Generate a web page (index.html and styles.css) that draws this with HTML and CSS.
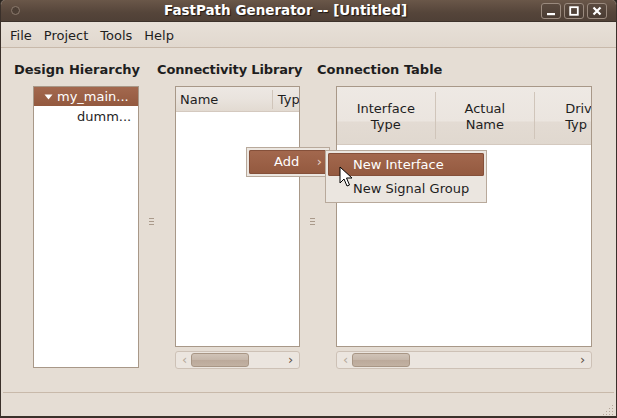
FILE: index.html
```html
<!DOCTYPE html>
<html>
<head>
<meta charset="utf-8">
<link rel="stylesheet" href="styles.css">
</head>
<body>
<div class="window">
  <div class="titlebar">
    <span class="title-orb"></span>
    <span class="title">FastPath Generator -- [Untitled]</span>
    <div class="wbtns">
      <span class="wbtn"><svg width="10" height="10" viewBox="0 0 10 10"><rect x="1" y="7" width="8" height="2.2" fill="#fff"/></svg></span>
      <span class="wbtn"><svg width="10" height="10" viewBox="0 0 10 10"><rect x="1.2" y="1.2" width="7.6" height="7.6" fill="none" stroke="#fff" stroke-width="1.8"/></svg></span>
      <span class="wbtn"><svg width="10" height="10" viewBox="0 0 10 10"><path d="M1.5 1.5 L8.5 8.5 M8.5 1.5 L1.5 8.5" stroke="#fff" stroke-width="2.2"/></svg></span>
    </div>
  </div>
  <div class="menubar">
    <span class="mi">File</span>
    <span class="mi">Project</span>
    <span class="mi">Tools</span>
    <span class="mi">Help</span>
  </div>
  <div class="main">
    <div class="pane p1">
      <div class="plabel">Design Hierarchy</div>
      <div class="tree">
        <div class="trow sel"><svg class="expander" width="9" height="6" viewBox="0 0 9 6"><path d="M0.5 0.5 H8.5 L4.5 5.5 Z" fill="#fff"/></svg>my_main...</div>
        <div class="trow child">dumm...</div>
      </div>
    </div>
    <div class="handle"><i></i><i></i><i></i></div>
    <div class="pane p2">
      <div class="plabel">Connectivity Library</div>
      <div class="sub">
        <div class="list">
          <div class="lhead">
            <div class="lcol lname">Name</div>
            <div class="lcol ltype">Typ</div>
          </div>
        </div>
        <div class="hscroll">
          <span class="arr">‹</span>
          <span class="thumb t1"></span>
          <span class="spacer"></span>
          <span class="arr r">›</span>
        </div>
      </div>
    </div>
    <div class="handle h2"><i></i><i></i><i></i></div>
    <div class="pane p3">
      <div class="plabel">Connection Table</div>
      <div class="sub">
        <div class="list table">
          <div class="thead">
            <div class="tcol c1">Interface<br>Type</div>
            <div class="tcol c2">Actual<br>Name</div>
            <div class="tcol c3">Driv<br>Typ</div>
          </div>
        </div>
        <div class="hscroll">
          <span class="arr">‹</span>
          <span class="thumb t2"></span>
          <span class="spacer"></span>
          <span class="arr r">›</span>
        </div>
      </div>
    </div>
  </div>
  <div class="statusbar"><span class="grip"></span></div>

  <div class="popup menu1">
    <div class="pitem hi"><span>Add</span><span class="parr">›</span></div>
  </div>
  <div class="popup menu2">
    <div class="pitem hi">New Interface</div>
    <div class="pitem">New Signal Group</div>
  </div>
  <svg class="cursor" width="14" height="22" viewBox="0 0 14 22">
    <path d="M1 1 L1 17 L5 13 L8 20 L10.5 19 L7.5 12 L13 12 Z" fill="#fff" stroke="#000" stroke-width="1" stroke-linejoin="round"/>
  </svg>
</div>
</body>
</html>
```
FILE: styles.css
```css
* { box-sizing: border-box; }
html, body { margin: 0; padding: 0; }
body {
  width: 617px; height: 418px; overflow: hidden;
  font-family: "DejaVu Sans", sans-serif;
  font-size: 13px;
  color: #1e1e1e;
  background: #2d2620;
}
.window {
  position: relative;
  width: 617px; height: 418px;
  background: #e5ddd4;
  border-left: 1px solid #3a302a;
  border-right: 1px solid #3a302a;
  border-bottom: 2px solid #3a302a;
  border-radius: 5px 5px 0 0;
  display: flex; flex-direction: column;
  overflow: hidden;
}
.titlebar {
  height: 22px; flex: none;
  background: linear-gradient(#6a5749, #55453a 60%, #4f4036);
  display: flex; align-items: center;
  position: relative;
  border-bottom: 1px solid #3c322b;
}
.title-orb {
  width: 9px; height: 9px; border-radius: 50%;
  border: 1px solid #8b7a6d; margin-left: 10px;
  background: #4d3f35;
}
.title {
  position: absolute; left: 0; right: 46px; text-align: center;
  color: #fff; font-weight: bold; font-size: 13.5px;
  text-shadow: 1px 1px 1px #1e1712;
  top: 2px;
}
.wbtns { margin-left: auto; display: flex; gap: 3px; margin-right: 9px; }
.wbtn {
  width: 20px; height: 16px; border-radius: 3px;
  border: 1px solid #9a8a7e;
  background: linear-gradient(#5a4a3f, #4a3c33);
  display: flex; align-items: center; justify-content: center;
}
.menubar {
  height: 26px; flex: none;
  display: flex; align-items: center;
  padding-left: 3px; padding-top: 1px;
  border-bottom: 1px solid #c8b9aa;
  background: linear-gradient(#e7e0d8, #e1d8ce);
}
.mi { padding: 0 6px; font-size: 13px; }
.main {
  flex: 1; display: flex;
  padding-left: 13px; padding-top: 13px;
}
.pane { display: flex; flex-direction: column; }
.plabel { font-weight: bold; font-size: 13px; height: 17px; line-height: 17px; white-space: nowrap; }
.p1 { width: 132px; }
.p2 { width: 150px; }
.p2 .plabel { letter-spacing: -0.15px; }
.p3 { width: 275px; }
.tree {
  margin-top: 8px; margin-left: 19px;
  width: 106px; height: 282px;
  background: #fff; border: 1px solid #a89888;
}
.trow { height: 19px; line-height: 19px; white-space: nowrap; overflow: hidden; }
.trow.sel {
  background: linear-gradient(#a3684e, #93593f);
  color: #fff; padding-left: 10px;
  display: flex; align-items: center;
}
.expander { margin-right: 4px; }
.trow.child { padding-left: 43px; margin-top: 1px; }
.sub { margin-top: 8px; margin-left: 18px; display: flex; flex-direction: column; }
.p3 .sub { margin-left: 19px; }
.list {
  width: 125px; height: 261px;
  background: #fff; border: 1px solid #a89888;
  overflow: hidden;
}
.table { width: 256px; }
.lhead {
  height: 25px; display: flex;
  background: linear-gradient(#ede8e3, #e9e3dd 50%, #e2dad1);
  border-bottom: 1px solid #d4c9bf;
}
.lcol { line-height: 25px; white-space: nowrap; overflow: hidden; }
.lname { width: 100px; padding-left: 4px; border-right: 1px solid #d0c5ba; height: 19px; margin-top: 3px; line-height: 19px; }
.ltype { padding-left: 5px; }
.thead {
  height: 58px; display: flex;
  background: linear-gradient(#eee9e4, #ebe5df 60%, #e3dbd3 61%, #e0d8cf);
  border-bottom: 1px solid #d4c9bf;
}
.tcol {
  text-align: center; line-height: 16px; padding-top: 14px;
  white-space: nowrap; overflow: hidden;
}
.c1 { width: 99px; border-right: 1px solid #d0c5ba; margin: 5px 0; padding-top: 9px; }
.c2 { width: 100px; border-right: 1px solid #d0c5ba; margin: 5px 0; padding-top: 9px; }
.c3 { width: 56px; text-align: left; padding-left: 30px; }
.hscroll {
  margin-top: 4px;
  height: 18px; width: 125px;
  border: 1px solid #cdc1b6; border-radius: 3px;
  background: #ebe5df;
  display: flex; align-items: center;
  padding: 0 2px;
}
.p3 .hscroll { width: 256px; }
.arr { width: 13px; text-align: center; color: #b5a899; font-size: 13px; line-height: 14px; }
.arr.r { color: #5a4e45; }
.thumb {
  height: 14px; width: 58px; border-radius: 3px;
  border: 1px solid #a89685;
  background: linear-gradient(#d0c3b7, #c5b6a9 50%, #bba99a 51%, #c2b2a3);
}
.spacer { flex: 1; }
.handle {
  width: 11px; display: flex; flex-direction: column;
  align-items: center; justify-content: center; gap: 2px;
  padding-bottom: 10px;
}
.h2 { width: 10px; }
.handle i { display: block; width: 5px; height: 1px; background: #aa9a8b; }
.statusbar {
  height: 24px; flex: none;
  margin: 0 2px;
  border-top: 1px solid #c8b9aa;
  position: relative;
}
.grip {
  position: absolute; right: 1px; bottom: 1px; width: 11px; height: 11px;
  background: radial-gradient(circle, #b3a597 0.6px, transparent 0.8px) 0 0 / 3px 3px;
  clip-path: polygon(100% 0, 100% 100%, 0 100%);
}
.popup {
  position: absolute;
  background: #ebe6e0;
  border: 1px solid #b8a99b;
  padding: 2px;
}
.menu1 { left: 245px; top: 147px; width: 84px; }
.menu2 { left: 324px; top: 150px; width: 162px; }
.pitem {
  height: 23px; line-height: 23px; padding-left: 25px;
  white-space: nowrap;
}
.pitem.hi {
  background: linear-gradient(#a3684e, #93593f);
  color: #fff; border-radius: 2px;
  box-shadow: inset 0 0 0 1px #85503a;
}
.menu1 .pitem { display: flex; padding-left: 25px; height: 24px; line-height: 24px; }
.parr { margin-left: auto; margin-right: 5px; color: #e8d6cc; }
.menu2 .pitem.hi { margin-bottom: 1px; }
.cursor { position: absolute; left: 338px; top: 166px; }
```
